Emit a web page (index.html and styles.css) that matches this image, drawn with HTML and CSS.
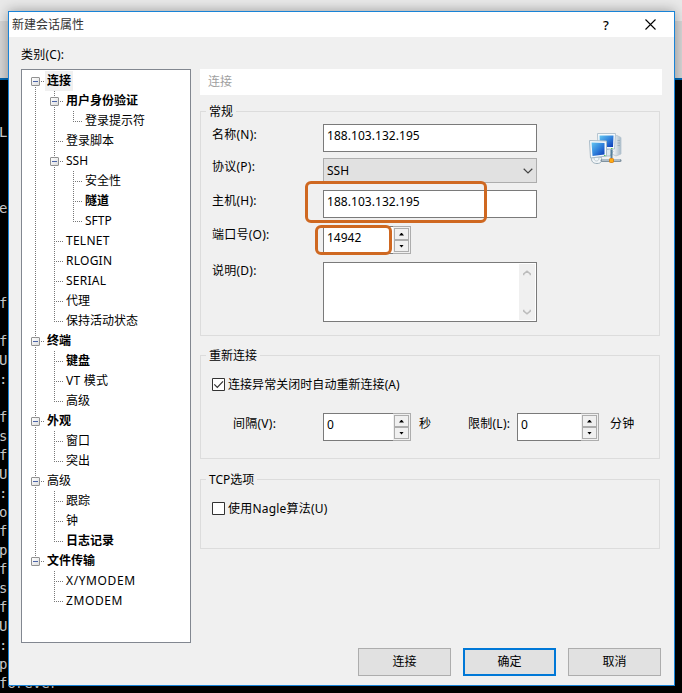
FILE: index.html
```html
<!DOCTYPE html>
<html lang="zh-CN">
<head>
<meta charset="utf-8">
<title>新建会话属性</title>
<link rel="stylesheet" href="styles.css">
</head>
<body>
<div class="desktop">
  <div class="strip-top"></div>
  <div class="strip-tool"></div>
  <pre class="terminal">L



e




f

f
U
:

f
s
f
U
:
o
f
p
f
s
f
U
:
p</pre>
  <pre class="terminal last">forever</pre>
</div>

<div class="dialog">
  <header class="titlebar">
    <span class="title">新建会话属性</span>
    <span class="help">?</span>
    <svg class="close" width="11" height="11" viewBox="0 0 11 11"><path d="M.5 .5 10.5 10.5M10.5 .5 .5 10.5" stroke="#000" stroke-width="1.1" fill="none"/></svg>
  </header>
  <div class="category">类别(C):</div>
  <main class="columns">
    <nav class="panel">
      <ul class="tree">
        <li><div class="node bold open selected"><span>连接</span></div>
          <ul>
            <li><div class="node bold open"><span>用户身份验证</span></div>
              <ul><li><div class="node"><span>登录提示符</span></div></li></ul></li>
            <li><div class="node"><span>登录脚本</span></div></li>
            <li><div class="node open"><span>SSH</span></div>
              <ul>
                <li><div class="node"><span>安全性</span></div></li>
                <li><div class="node bold"><span>隧道</span></div></li>
                <li><div class="node"><span>SFTP</span></div></li>
              </ul></li>
            <li><div class="node latin"><span>TELNET</span></div></li>
            <li><div class="node latin"><span>RLOGIN</span></div></li>
            <li><div class="node latin"><span>SERIAL</span></div></li>
            <li><div class="node"><span>代理</span></div></li>
            <li><div class="node"><span>保持活动状态</span></div></li>
          </ul></li>
        <li><div class="node bold open"><span>终端</span></div>
          <ul>
            <li><div class="node bold"><span>键盘</span></div></li>
            <li><div class="node latin"><span>VT 模式</span></div></li>
            <li><div class="node"><span>高级</span></div></li>
          </ul></li>
        <li><div class="node bold open"><span>外观</span></div>
          <ul>
            <li><div class="node"><span>窗口</span></div></li>
            <li><div class="node"><span>突出</span></div></li>
          </ul></li>
        <li><div class="node open"><span>高级</span></div>
          <ul>
            <li><div class="node"><span>跟踪</span></div></li>
            <li><div class="node"><span>钟</span></div></li>
            <li><div class="node bold"><span>日志记录</span></div></li>
          </ul></li>
        <li><div class="node bold open"><span>文件传输</span></div>
          <ul>
            <li><div class="node wide"><span>X/YMODEM</span></div></li>
            <li><div class="node wide"><span>ZMODEM</span></div></li>
          </ul></li>
      </ul>
    </nav>

    <div class="page">
      <div class="heading">连接</div>

      <section class="group general">
        <h2>常规</h2>
        <div class="form">
          <label>名称(N):</label><div class="input">188.103.132.195</div>
          <label class="up">协议(P):</label>
          <div class="select"><span>SSH</span><svg width="10" height="6" viewBox="0 0 10 6"><path d="M.7 .8 5 5 9.3 .8" fill="none" stroke="#444" stroke-width="1.2"/></svg></div>
          <label>主机(H):</label><div class="input marked host">188.103.132.195</div>
          <label class="up">端口号(O):</label>
          <div class="spin marked port"><span>14942</span><div class="arrows"><i class="inc"></i><i class="dec"></i></div></div>
          <label class="up">说明(D):</label>
          <div class="memo"><div class="scroll">
            <svg width="8" height="6" viewBox="0 0 8 6"><path d="M.7 5.2V4L4 1.2 7.3 4v1.2" fill="none" stroke="#bcbcbc" stroke-width="1.5"/></svg>
            <svg width="8" height="6" viewBox="0 0 8 6"><path d="M.7 .8V2L4 4.8 7.3 2V.8" fill="none" stroke="#bcbcbc" stroke-width="1.5"/></svg>
          </div></div>
        </div>
        <svg class="network" width="34" height="34" viewBox="0 0 34 34">
          <defs>
            <linearGradient id="screen" x1="0" y1="0" x2="1" y2="1"><stop offset="0" stop-color="#63c6f1"/><stop offset=".5" stop-color="#3283dc"/><stop offset="1" stop-color="#0c37b5"/></linearGradient>
            <linearGradient id="tower" x1="0" x2="1"><stop offset="0" stop-color="#fff"/><stop offset="1" stop-color="#a9bbc9"/></linearGradient>
          </defs>
          <path d="M24 4.5 29 3.5 33 5.5V22l-5 2-4-2z" fill="url(#tower)" stroke="#b5c4cf" stroke-width=".8"/>
          <path d="M29.5 8.5h2.5M29.5 11h2.5M29.5 13.5h2.5" stroke="#8fa4b3" stroke-width=".7"/>
          <path d="M17 18.5l5-2 3 3-3 4.5h-6z" fill="#dce7ed" stroke="#9eb2c0" stroke-width=".8"/>
          <path d="M9.5 1.5h18l-1 15.5H10z" fill="#f6fafc" stroke="#b4c3cf"/>
          <path d="M11.5 3.5h14L25 15H12z" fill="url(#screen)"/>
          <path d="M4 25c-1.5 4 1 6.5 5 6.5S15 29 13 25z" fill="#f3f7f9" stroke="#9aadb9"/>
          <path d="M6 26c0 4 5 4 5 0" fill="none" stroke="#bdcad2"/>
          <path d="M1.5 8.5 18.5 9v15L2.5 26z" fill="#f6fafc" stroke="#a9bbc8"/>
          <path d="M3.5 10.5 16.5 11v11.5L4.500 24z" fill="url(#screen)"/>
          <path d="M16 23.5h1.5M23 16.5h1.5" stroke="#55c755"/>
          <path d="M23.5 17.5V26" stroke="#57809c" stroke-width="2"/>
          <path d="M14 28.5h18" stroke="#8093a1" stroke-width="3" stroke-linecap="round"/>
          <path d="M14 28h18" stroke="#dfe8ed"/>
          <rect x="21.5" y="26.5" width="4" height="4" rx=".8" fill="#ffac12" stroke="#d77708" stroke-width=".8"/>
        </svg>
      </section>

      <section class="group reconnect">
        <h2>重新连接</h2>
        <div class="check"><svg width="13" height="13" viewBox="0 0 13 13"><path fill="#fff" stroke="#333" d="M.5 .5h12v12H.5z"/><path d="m2.3 6.3 3 3L11 3.3" fill="none" stroke="#333" stroke-width="1.2"/></svg>连接异常关闭时自动重新连接(A)</div>
        <div class="timing">
          <label class="interval">间隔(V):</label>
          <div class="spin"><span>0</span><div class="arrows"><i class="inc"></i><i class="dec"></i></div></div>
          <label class="unit">秒</label>
          <label class="limit">限制(L):</label>
          <div class="spin narrow"><span>0</span><div class="arrows"><i class="inc"></i><i class="dec"></i></div></div>
          <label class="minutes">分钟</label>
        </div>
      </section>

      <section class="group tcp">
        <h2>TCP选项</h2>
        <div class="check"><svg width="13" height="13" viewBox="0 0 13 13"><path fill="#fff" stroke="#333" d="M.5 .5h12v12H.5z"/></svg><span class="nagle">使用Nagle算法(U)</span></div>
      </section>
    </div>
  </main>
  <footer class="actions">
    <div class="button">连接</div>
    <div class="button primary">确定</div>
    <div class="button">取消</div>
  </footer>
</div>
</body>
</html>
```
FILE: styles.css
```css
*, *::before, *::after { box-sizing: border-box; }
body {
  margin: 0; width: 682px; height: 693px; overflow: hidden; position: relative;
  background: #000; color: #000;
  font: 12px/18px "Noto Sans", "Noto Sans CJK SC", sans-serif;
}
ul, h2, pre { margin: 0; padding: 0; list-style: none; }

.strip-top { height: 21px; background: #e9e9e9; }
.strip-tool { height: 59px; background: #d7d7d7; border-bottom: 2px solid #0067b0; }
.terminal { width: 9px; margin: 43px 0 0 -1px; color: #d8d8d8; font: 14px/19px "DejaVu Sans Mono", monospace; }
.terminal.last { width: 66px; margin-top: 0; }

.dialog {
  position: absolute; left: 8px; top: 11px; width: 667px; height: 675px;
  background: #f0f0f0; border: 1px solid #1883d7;
  box-shadow: 0 0 12px rgba(0, 0, 0, .35);
}
.titlebar { display: flex; align-items: center; height: 25px; padding: 0 18px 0 3px; background: #fff; color: #333; }
.title { flex: 1; }
.help { width: 42px; color: #000; font-size: 13px; font-weight: 500; }
.close { display: block; }
.category { height: 32px; padding: 9px 0 0 12px; letter-spacing: .2px; }

.columns { display: flex; height: 574px; padding-left: 12px; gap: 9px; }
.panel { width: 170px; border: 1px solid #828790; background: #fff; padding: 1px 0 0 4px; }
.tree li { position: relative; }
.tree ul { padding-left: 19px; }
.tree li::before {
  content: ""; position: absolute; left: 9px; top: 0; bottom: 0; width: 1px;
  background: repeating-linear-gradient(#777 0 1px, transparent 1px 2px);
}
.tree li:last-child::before { bottom: auto; height: 11px; }
.tree > li:first-child::before { top: 10px; }
.node { position: relative; display: flex; height: 20px; padding-left: 19px; line-height: 20px; }
.node::before {
  content: ""; position: absolute; left: 9px; top: 10px; width: 9px; height: 1px;
  background: repeating-linear-gradient(90deg, #777 0 1px, transparent 1px 2px);
}
.node.open::after {
  content: ""; position: absolute; left: 5px; top: 6px; width: 9px; height: 9px;
  border: 1px solid #919191; border-radius: 1px;
  background: linear-gradient(#4b63a7, #4b63a7) center / 5px 1px no-repeat, linear-gradient(135deg, #fff, #ddd);
}
.node span { padding: 0 2px; white-space: nowrap; }
.node.selected span { background: #f0f0f0; }
.bold { font-weight: 700; }
.latin { letter-spacing: .25px; }
.wide { letter-spacing: .6px; }

.page { width: 462px; }
.heading { height: 26px; padding: 4px 8px; background: #fff; color: #a0a0a0; }
.group { display: flex; flex-wrap: wrap; align-content: flex-start; width: 460px; border: 1px solid #dcdcdc; padding-left: 11px; }
.group h2 {
  width: max-content; height: 18px; margin: -9px 300px 0 -6px; padding: 0 3px;
  background: #f0f0f0; font-size: 12px; font-weight: 400; line-height: 18px;
}
.general { height: 225px; margin-top: 16px; }
.reconnect { height: 104px; margin-top: 19px; }
.tcp { height: 70px; margin-top: 20px; }

.form {
  display: grid; grid-template-columns: 111px 214px;
  grid-template-rows: 34px 32px 36px 36px 60px; margin-top: 3px;
}
label { padding-top: 2px; white-space: nowrap; letter-spacing: .25px; }
label.up { padding-top: 0; }
.input { height: 28px; padding: 1px 3px; border: 1px solid #7a7a7a; background: #fff; line-height: 20px; letter-spacing: .05px; }
.select {
  display: flex; justify-content: space-between; align-items: center; height: 25px;
  padding: 0 3px; border: 1px solid #adadad; background: #e1e1e1;
}
.marked { position: relative; }
.marked::after {
  content: ""; position: absolute; border: 3px solid #cf6821; border-radius: 6px;
}
.host::after { left: -19px; top: -10px; width: 182px; height: 42px; }
.port::after { left: -9px; top: -2px; width: 77px; height: 30px; }
.spin { display: flex; width: 88px; height: 28px; border: 1px solid #7a7a7a; background: #fff; line-height: 22px; }
.spin > span { flex: 1; padding-left: 3px; }
.arrows {
  display: flex; flex-direction: column; width: 18px; height: 28px; margin: -1px -1px 0 0;
  padding: 1px; border: 1px solid #adadad; border-left: 0; background: #f0f0f0;
}
.spin.narrow { width: 82px; }
.arrows i { display: flex; flex: 1; align-items: center; justify-content: center; border: 1px solid #adadad; }
.arrows i::before { content: ""; width: 5px; height: 3px; background: #000; }
.inc::before { clip-path: polygon(50% 0, 100% 100%, 0 100%); }
.dec::before { clip-path: polygon(0 0, 100% 0, 50% 100%); }
.memo { display: flex; justify-content: flex-end; height: 60px; padding: 1px; border: 1px solid #7a7a7a; background: #fff; }
.scroll { display: flex; flex-direction: column; justify-content: space-between; align-items: center; width: 16px; padding: 6px 0 5px; background: #f0f0f0; }
.network { margin: 11px 0 0 51px; }

.check { display: flex; align-items: center; gap: 3px; width: 100%; height: 18px; margin-top: 11px; }
.reconnect .check { letter-spacing: .05px; }
.reconnect .check svg, .tcp .check svg { margin-top: -1px; }
.nagle { letter-spacing: .2px; }
.timing { display: flex; margin-top: 19px; }
.interval { width: 111px; padding-left: 21px; }
.unit { width: 57px; padding-left: 8px; }
.limit { width: 49px; }
.minutes { padding-left: 11px; }

.actions { display: flex; justify-content: flex-end; gap: 12px; margin-top: 5px; padding-right: 13px; }
.button { width: 93px; height: 28px; border: 1px solid #adadad; background: #e1e1e1; line-height: 26px; text-align: center; }
.button.primary { border: 2px solid #0078d7; line-height: 24px; }
```
